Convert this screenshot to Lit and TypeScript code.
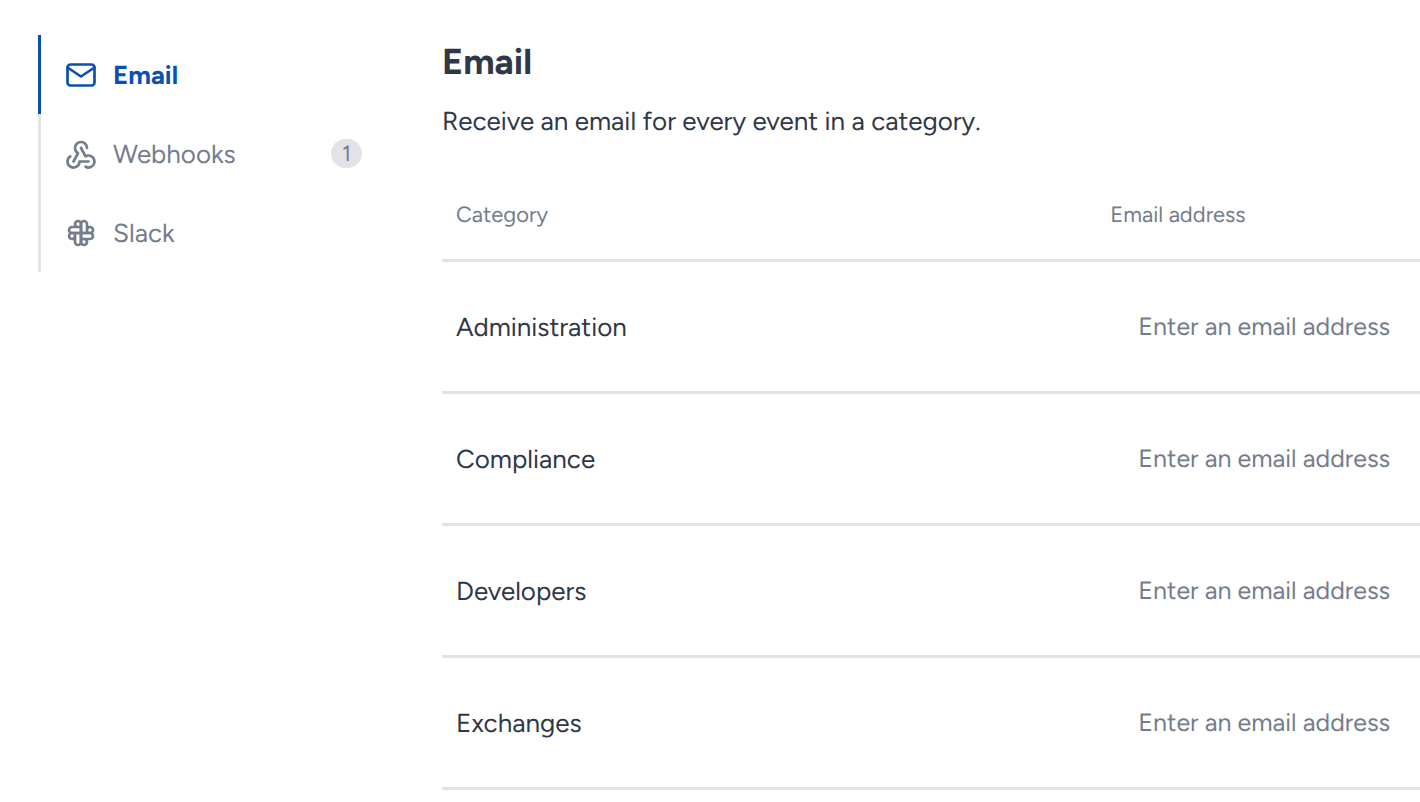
import { LitElement, html, css, svg } from "lit";
import { customElement, state } from "lit/decorators.js";
import { classMap } from "lit/directives/class-map.js";

type Channel = { id: string; label: string; count?: number; paths: string[] };

const CHANNELS: Channel[] = [
  {
    id: "email",
    label: "Email",
    paths: [
      "M3 7a2 2 0 0 1 2 -2h14a2 2 0 0 1 2 2v10a2 2 0 0 1 -2 2h-14a2 2 0 0 1 -2 -2v-10z",
      "M3 7l9 6l9 -6",
    ],
  },
  {
    id: "webhooks",
    label: "Webhooks",
    count: 1,
    paths: [
      "M4.876 13.61a4 4 0 1 0 6.124 3.39h6",
      "M15.066 20.502a4 4 0 1 0 1.934 -7.502c-.706 0 -1.424 .179 -2 .5l-3 -5.5",
      "M16 8a4 4 0 1 0 -8 0c0 1.506 .77 2.818 2 3.5l-3 5.5",
    ],
  },
  {
    id: "slack",
    label: "Slack",
    paths: [
      "M12 12v-6a2 2 0 0 1 4 0v6m0 -2a2 2 0 1 1 2 2h-6",
      "M12 12h6a2 2 0 0 1 0 4h-6m2 0a2 2 0 1 1 -2 2v-6",
      "M12 12v6a2 2 0 0 1 -4 0v-6m0 2a2 2 0 1 1 -2 -2h6",
      "M12 12h-6a2 2 0 0 1 0 -4h6m-2 0a2 2 0 1 1 2 -2v6",
    ],
  },
];

const CATEGORIES = ["Administration", "Compliance", "Developers", "Exchanges"];

@customElement("channel-nav")
class ChannelNav extends LitElement {
  @state() private current = "email";

  static styles = css`
    :host {
      display: block;
    }
    .item {
      display: flex;
      align-items: center;
      box-sizing: border-box;
      height: 79px;
      padding-left: 22px;
      border-left: 3px solid #e2e2e9;
      color: #747d8c;
      font-size: 26px;
      line-height: 32px;
      text-decoration: none;
    }
    .active {
      border-left-color: #0a50b4;
      color: #0a50b4;
      font-weight: 700;
    }
    .icon {
      flex: none;
      width: 36px;
      height: 36px;
      margin-right: 14px;
      fill: none;
      stroke: currentColor;
      stroke-width: 1.8;
      stroke-linecap: round;
      stroke-linejoin: round;
    }
    .label {
      flex: 1;
    }
    .badge {
      box-sizing: border-box;
      min-width: 31px;
      padding: 0 8px;
      border-radius: 15px;
      background: #e2e2e9;
      font-size: 22px;
      line-height: 29px;
      text-align: center;
    }
  `;

  render() {
    return html`<nav aria-label="Notification channels">
      ${CHANNELS.map(
        (c) => html`<a
          href="#${c.id}"
          class=${classMap({ item: true, active: c.id === this.current })}
          @click=${() => (this.current = c.id)}
        >
          <svg class="icon" viewBox="0 0 24 24" aria-hidden="true">
            ${c.paths.map((d) => svg`<path d=${d}></path>`)}
          </svg>
          <span class="label">${c.label}</span>
          ${c.count ? html`<span class="badge">${c.count}</span>` : null}
        </a>`
      )}
    </nav>`;
  }
}

@customElement("category-table")
class CategoryTable extends LitElement {
  static styles = css`
    :host {
      display: block;
    }
    .table {
      width: 100%;
      table-layout: fixed;
      border-collapse: separate;
      border-spacing: 0;
    }
    .head,
    .name,
    .field {
      box-sizing: border-box;
      padding: 0 14px;
      border-bottom: 3px solid #e2e2e9;
      text-align: left;
      vertical-align: middle;
      font-weight: 400;
    }
    .head {
      height: 93px;
      color: #747d8c;
      font-size: 22px;
    }
    .name,
    .field {
      height: 132px;
      font-size: 26px;
    }
    .field {
      padding-right: 0;
    }
    .address {
      width: 33.1%;
    }
    .input {
      display: block;
      box-sizing: border-box;
      width: 100%;
      height: 60px;
      padding: 0 0 0 28px;
      border: 0;
      outline: 0;
      background: transparent;
      color: #2f3848;
      font: inherit;
      font-size: 25px;
      text-rendering: inherit;
    }
    .input::placeholder {
      color: #747d8c;
      opacity: 1;
    }
  `;

  render() {
    return html`<table class="table">
      <thead>
        <tr>
          <th class="head" scope="col">Category</th>
          <th class="head address" scope="col">Email address</th>
        </tr>
      </thead>
      <tbody>
        ${CATEGORIES.map(
          (name) => html`<tr>
            <td class="name"><label for=${name}>${name}</label></td>
            <td class="field">
              <input class="input" id=${name} type="email" placeholder="Enter an email address" />
            </td>
          </tr>`
        )}
      </tbody>
    </table>`;
  }
}

@customElement("app-root")
class AppRoot extends LitElement {
  static styles = css`
    :host {
      display: block;
      background: #fff;
      color: #2f3848;
      font-family: Figtree, Lato, "Open Sans", sans-serif;
      text-rendering: geometricPrecision;
    }
    .page {
      display: grid;
      grid-template-columns: 324px minmax(0, 1fr);
      column-gap: 80px;
      padding: 35px 0 0 38px;
    }
    .title {
      margin: 0;
      padding-top: 5px;
      font-size: 36px;
      line-height: 44px;
      font-weight: 700;
    }
    .intro {
      margin: 21px 0 32px;
      font-size: 26px;
      line-height: 32px;
    }
  `;

  render() {
    return html`<div class="page">
      <channel-nav></channel-nav>
      <main>
        <h1 class="title">Email</h1>
        <p class="intro">Receive an email for every event in a category.</p>
        <category-table></category-table>
      </main>
    </div>`;
  }
}
